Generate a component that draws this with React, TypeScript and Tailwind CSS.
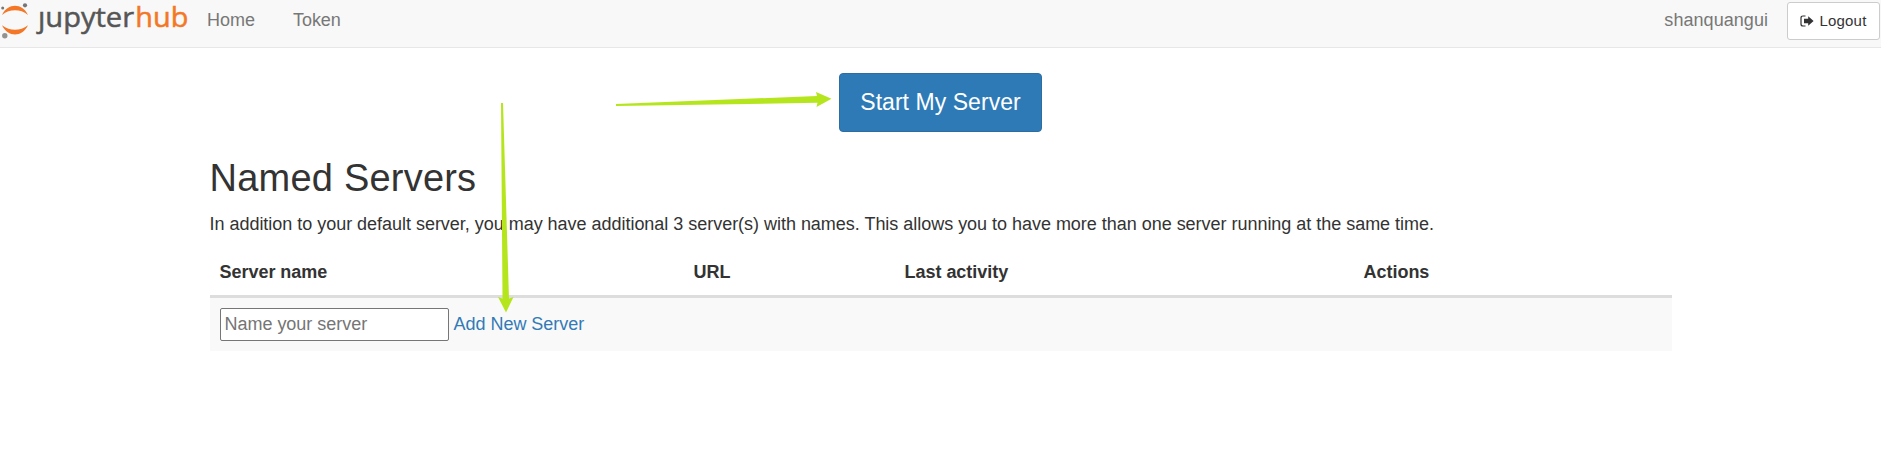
import React from "react";

function Logo() {
  return (
    <svg width="190" height="47" viewBox="0 0 190 47" className="block shrink-0" role="img" aria-label="jupyterhub">
      <path d="M2 15 C5 8.500 10 5.800 15 5.800 C20 5.800 25 8.500 28 15 C24 11.700 19.500 10.300 15 10.300 C10.500 10.300 6 11.700 2 15Z" fill="#f37726" />
      <path d="M2 25.200 C5 31.500 10 34.400 15 34.400 C20 34.400 25 31.500 28 25.200 C24 28.500 19.500 29.800 15 29.800 C10.500 29.800 6 28.500 2 25.200Z" fill="#f37726" />
      <circle cx="25" cy="5.300" r="2.100" fill="#767677" />
      <circle cx="2.700" cy="8" r="1.500" fill="#767677" />
      <circle cx="4.800" cy="35.800" r="2.700" fill="#929292" />
      <text x="38" y="27.400" fontSize="28" fill="#565656" stroke="#565656" strokeWidth="0.500" textLength="96" lengthAdjust="spacingAndGlyphs" className="font-['Open_Sans',sans-serif]">ȷupyter</text>
      <text x="135.300" y="27.400" fontSize="28" fill="#f37726" stroke="#f37726" strokeWidth="0.500" textLength="53" lengthAdjust="spacingAndGlyphs" className="font-['Open_Sans',sans-serif]">hub</text>
    </svg>
  );
}

function LogoutIcon() {
  return (
    <svg width="14" height="12" viewBox="0 0 14 12" className="block">
      <path d="M5.500 1 H3 Q1 1 1 3 V9 Q1 11 3 11 H5.500" fill="none" stroke="#333" strokeWidth="1.200" />
      <path d="M4 3.700 H8.200 V1.200 L13.600 6 L8.200 10.800 V8.300 H4Z" fill="#333" />
    </svg>
  );
}

function Annotations() {
  return (
    <svg className="pointer-events-none absolute left-0 top-0" width="1881" height="464" viewBox="0 0 1881 464" fill="#b5e61d">
      <path d="M616 104 L817 96 L816 92 L831.500 98.700 L816.500 107 L817.500 102.800 L616 106Z" />
      <path d="M501 103 L503 103 L509 298.500 L513.500 297 L506 312.500 L498 297 L502.500 298.500Z" />
    </svg>
  );
}

export default function App() {
  return (
    <div className="relative h-[464px] w-[1881px] overflow-hidden bg-white font-['Liberation_Sans',Arial,sans-serif] text-[18px] leading-[25px] tracking-[-0.025px] text-[#333]">
      <nav className="flex h-12 border-b border-[#e7e7e7] bg-[#f8f8f8] text-[#777]">
        <Logo />
        <div className="flex gap-[38px] pl-[17px] pt-2">
          <a>Home</a>
          <a>Token</a>
        </div>
        <div className="ml-auto flex items-start">
          <span className="pr-[19px] pt-2 tracking-[0.05px]">shanquangui</span>
          <button className="mt-[2px] mr-px flex h-[38px] w-[93px] items-center justify-center gap-[5px] rounded-[3px] border border-[#ccc] bg-white pb-px text-[15px] tracking-[0.2px] text-[#333]">
            <LogoutIcon />
            Logout
          </button>
        </div>
      </nav>

      <main className="mx-auto w-[1462px] pt-[25px]">
        <div className="flex justify-center">
          <button className="h-[59px] w-[203px] rounded-[4px] border border-[#2e6da4] bg-[#2d7ab7] pb-px text-[23px] tracking-[0.05px] text-white">
            Start My Server
          </button>
        </div>
        <h2 className="mt-[26px] text-[38px] leading-[41px] tracking-[0.22px]">Named Servers</h2>
        <p className="mt-[13px]">
          In addition to your default server, you may have additional 3 server(s) with names. This allows you to have more than one server running at the same time.
        </p>
        <table className="mt-[10px] w-full table-fixed border-collapse text-left">
          <colgroup>
            <col className="w-[474px]" />
            <col className="w-[211px]" />
            <col className="w-[459px]" />
            <col />
          </colgroup>
          <thead>
            <tr className="h-12">
              <th className="px-[10px] pb-0 pt-[3px]">Server name</th>
              <th className="px-[10px] pb-0 pt-[3px]">URL</th>
              <th className="px-[10px] pb-0 pt-[3px]">Last activity</th>
              <th className="px-[10px] pb-0 pt-[3px]">Actions</th>
            </tr>
          </thead>
          <tbody>
            <tr>
              <td colSpan={4} className="p-0">
                <div className="flex h-14 items-center gap-[5px] border-t-[3px] border-[#ddd] bg-[#f9f9f9] pl-[10px]">
                  <input
                    placeholder="Name your server"
                    className="h-[33px] w-[229px] rounded-[2px] border border-[#767676] bg-white px-1 tracking-[-0.025px] placeholder:text-[#757575]"
                  />
                  <a className="text-[#337ab7]">Add New Server</a>
                </div>
              </td>
            </tr>
          </tbody>
        </table>
      </main>
      <Annotations />
    </div>
  );
}
